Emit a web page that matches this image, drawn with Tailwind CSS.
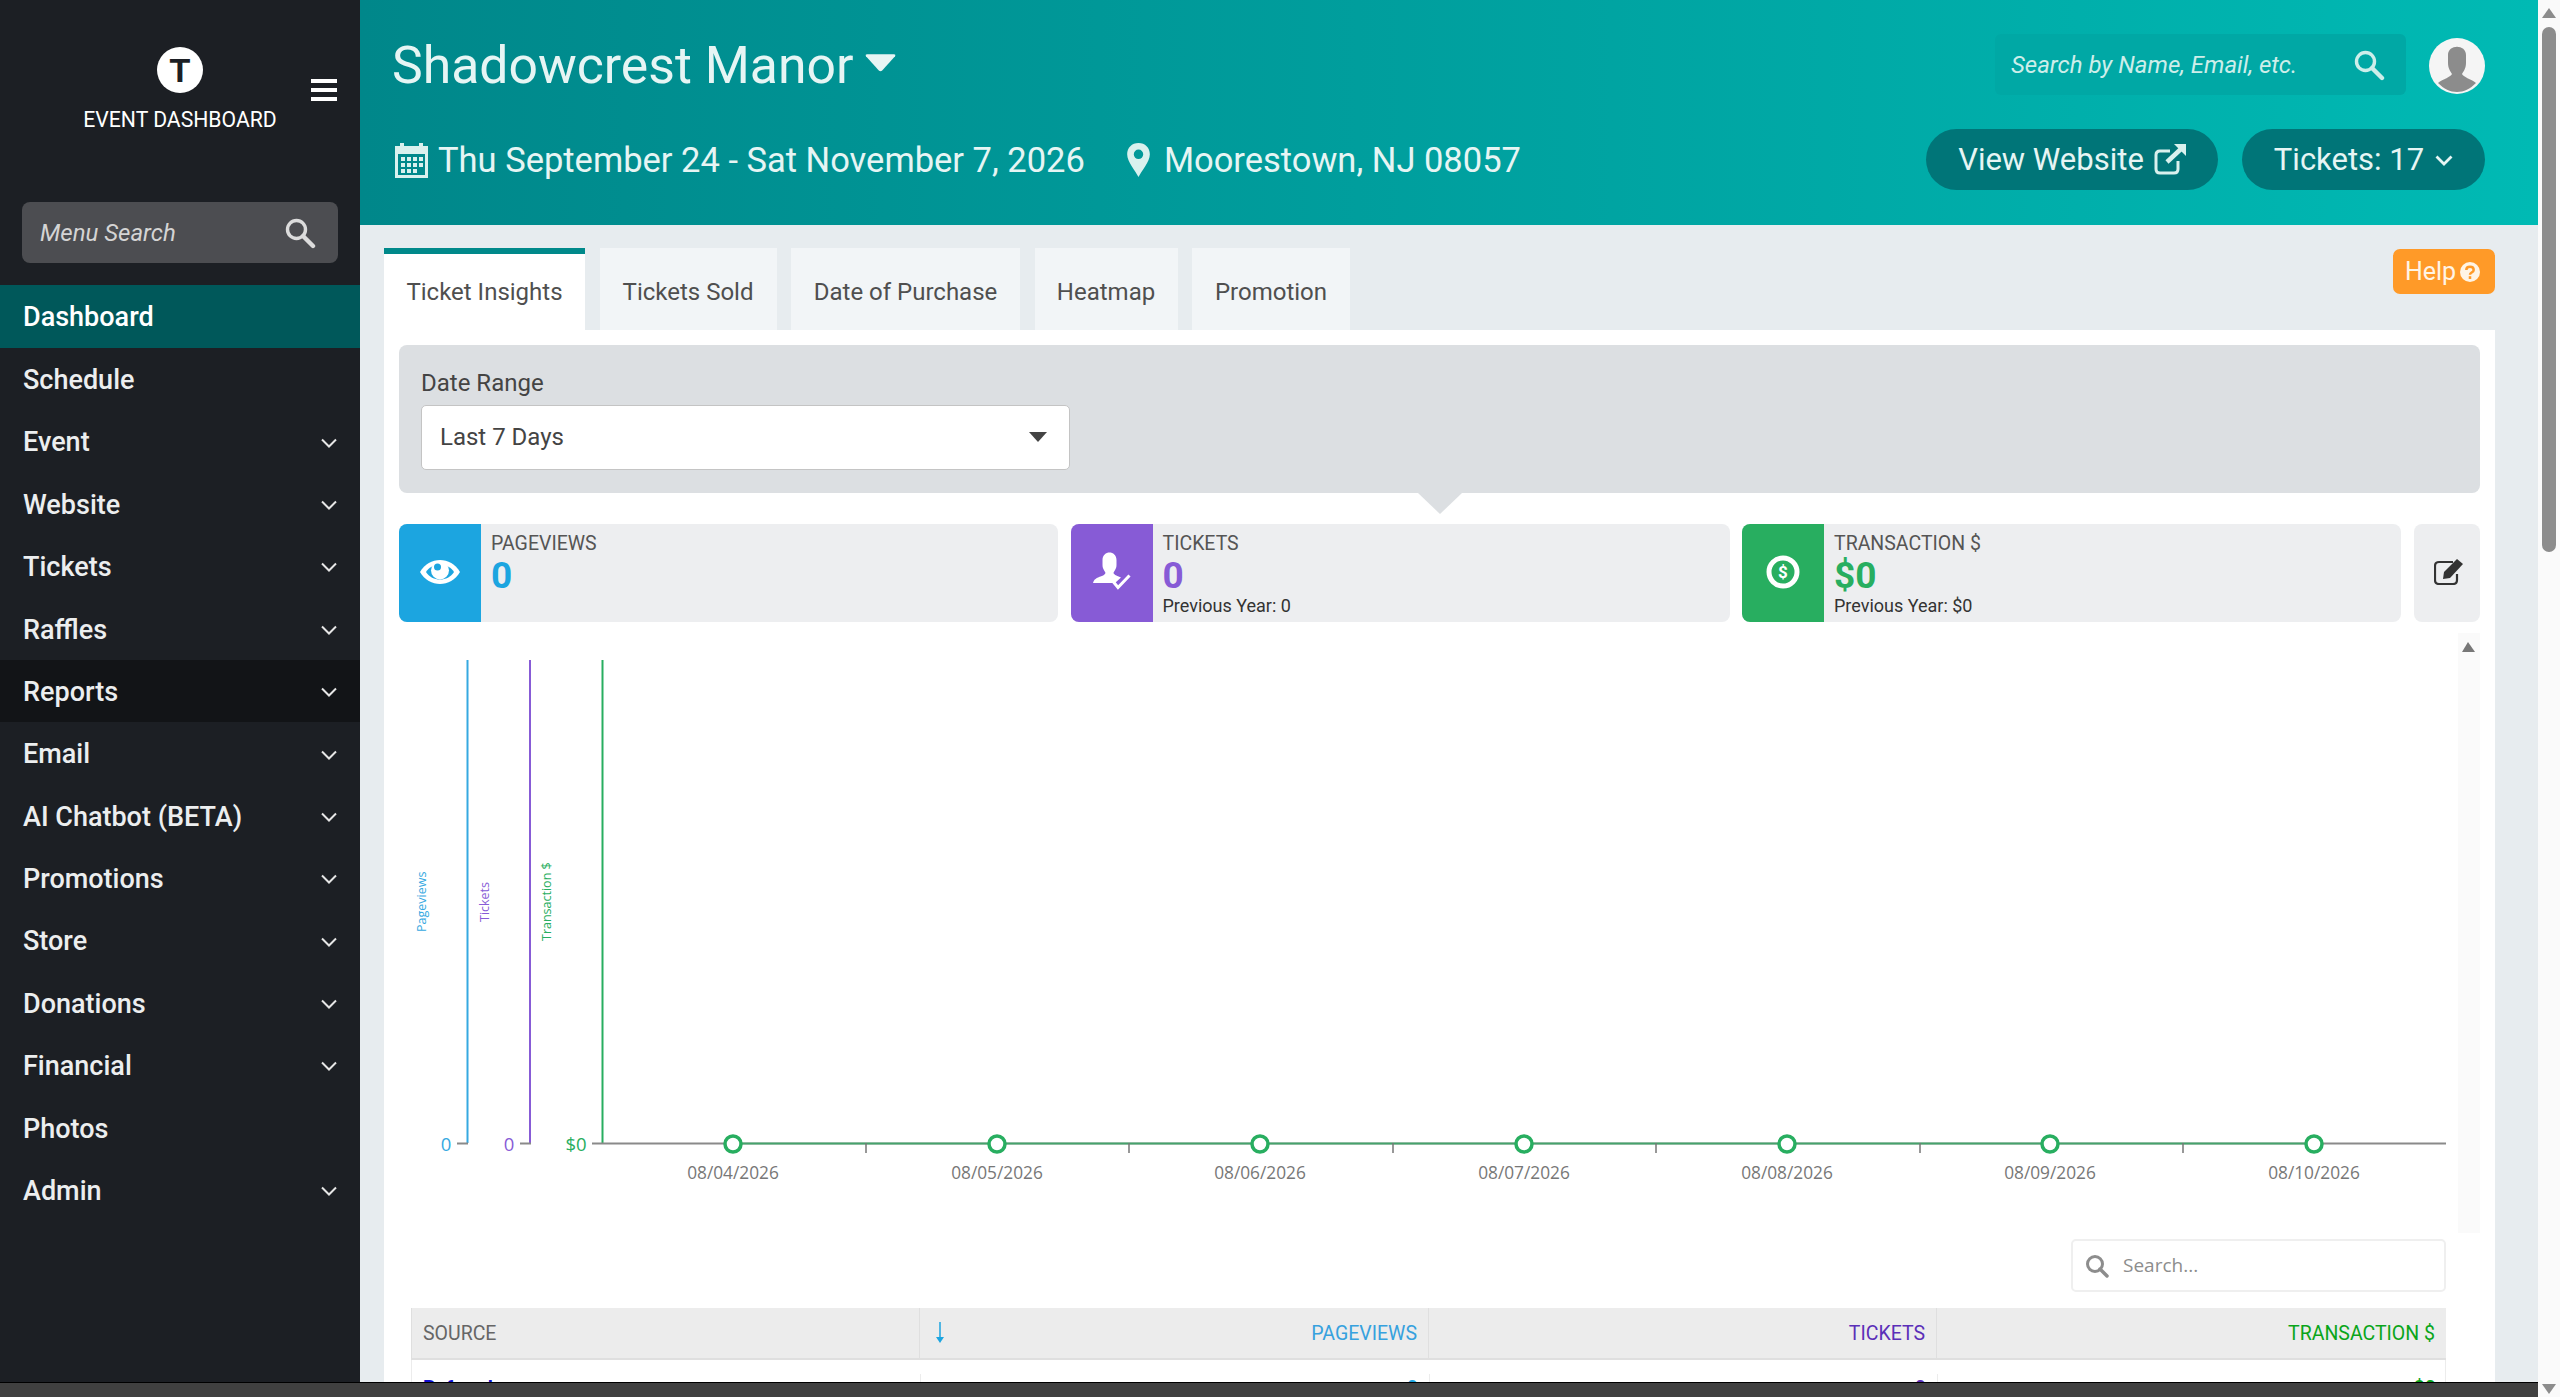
<!DOCTYPE html>
<html lang="en">
<head>
    <meta charset="UTF-8">
    <title>Event Dashboard</title>
    <script src="https://cdn.jsdelivr.net/npm/@tailwindcss/browser@4"></script>
</head>
<body class="h-screen overflow-hidden bg-[#f8f8f8] font-['Roboto',sans-serif]">
<div class="flex h-[1397px] flex-col">
<div class="flex h-[1382px] w-[2538px] overflow-hidden">

    <!-- Sidebar -->
    <aside class="flex w-[360px] shrink-0 flex-col bg-[#1c1f24]">
        <div class="relative h-[285px] shrink-0">
            <div class="absolute left-[157px] top-[47px] flex h-[46px] w-[46px] items-center justify-center rounded-full bg-white font-['Liberation_Sans',sans-serif] text-[34px] leading-none font-bold text-[#1c1f24]">T</div>
            <div class="absolute left-0 top-[105px] w-full text-center text-[21.2px] leading-[30px] text-white">EVENT DASHBOARD</div>
            <div class="absolute left-[311px] top-[79px] flex h-[22px] w-[26px] flex-col justify-between">
                <div class="h-[4px] bg-white"></div><div class="h-[4px] bg-white"></div><div class="h-[4px] bg-white"></div>
            </div>
            <div class="absolute left-[22px] top-[202px] flex h-[61px] w-[316px] items-center justify-between rounded-[8px] bg-[#4c4d51] pl-[18px] pr-[22px]">
                <span class="text-[24px] text-[#d4d4d4] italic">Menu Search</span>
                <svg width="32" height="32" viewBox="0 0 32 32" fill="none" stroke="#dcdcdc"><circle cx="12.5" cy="12.5" r="9" stroke-width="3.4"/><path d="M19 19 29 29" stroke-width="4.4" stroke-linecap="round"/></svg>
            </div>
        </div>
        <nav class="flex flex-col text-[27px] font-medium text-[#eceeef]">
            <a class="flex h-[63px] items-center bg-[#00585a] pl-[23px] pt-[2px] text-white">Dashboard</a>
            <a class="flex h-[62.4px] items-center pl-[23px] pt-[2px]">Schedule</a>
            <a class="flex h-[62.4px] items-center justify-between pl-[23px] pr-[23px] pt-[2px]">Event<svg width="16" height="10" viewBox="0 0 16 10" fill="none" stroke="#e6e6e6" stroke-width="2"><path d="M1 1.5 8 8.5 15 1.5"/></svg></a>
            <a class="flex h-[62.4px] items-center justify-between pl-[23px] pr-[23px] pt-[2px]">Website<svg width="16" height="10" viewBox="0 0 16 10" fill="none" stroke="#e6e6e6" stroke-width="2"><path d="M1 1.5 8 8.5 15 1.5"/></svg></a>
            <a class="flex h-[62.4px] items-center justify-between pl-[23px] pr-[23px] pt-[2px]">Tickets<svg width="16" height="10" viewBox="0 0 16 10" fill="none" stroke="#e6e6e6" stroke-width="2"><path d="M1 1.5 8 8.5 15 1.5"/></svg></a>
            <a class="flex h-[62.4px] items-center justify-between pl-[23px] pr-[23px] pt-[2px]">Raffles<svg width="16" height="10" viewBox="0 0 16 10" fill="none" stroke="#e6e6e6" stroke-width="2"><path d="M1 1.5 8 8.5 15 1.5"/></svg></a>
            <a class="flex h-[62.4px] items-center justify-between bg-[#121417] pl-[23px] pr-[23px] pt-[2px]">Reports<svg width="16" height="10" viewBox="0 0 16 10" fill="none" stroke="#e6e6e6" stroke-width="2"><path d="M1 1.5 8 8.5 15 1.5"/></svg></a>
            <a class="flex h-[62.4px] items-center justify-between pl-[23px] pr-[23px] pt-[2px]">Email<svg width="16" height="10" viewBox="0 0 16 10" fill="none" stroke="#e6e6e6" stroke-width="2"><path d="M1 1.5 8 8.5 15 1.5"/></svg></a>
            <a class="flex h-[62.4px] items-center justify-between pl-[23px] pr-[23px] pt-[2px]">AI Chatbot (BETA)<svg width="16" height="10" viewBox="0 0 16 10" fill="none" stroke="#e6e6e6" stroke-width="2"><path d="M1 1.5 8 8.5 15 1.5"/></svg></a>
            <a class="flex h-[62.4px] items-center justify-between pl-[23px] pr-[23px] pt-[2px]">Promotions<svg width="16" height="10" viewBox="0 0 16 10" fill="none" stroke="#e6e6e6" stroke-width="2"><path d="M1 1.5 8 8.5 15 1.5"/></svg></a>
            <a class="flex h-[62.4px] items-center justify-between pl-[23px] pr-[23px] pt-[2px]">Store<svg width="16" height="10" viewBox="0 0 16 10" fill="none" stroke="#e6e6e6" stroke-width="2"><path d="M1 1.5 8 8.5 15 1.5"/></svg></a>
            <a class="flex h-[62.4px] items-center justify-between pl-[23px] pr-[23px] pt-[2px]">Donations<svg width="16" height="10" viewBox="0 0 16 10" fill="none" stroke="#e6e6e6" stroke-width="2"><path d="M1 1.5 8 8.5 15 1.5"/></svg></a>
            <a class="flex h-[62.4px] items-center justify-between pl-[23px] pr-[23px] pt-[2px]">Financial<svg width="16" height="10" viewBox="0 0 16 10" fill="none" stroke="#e6e6e6" stroke-width="2"><path d="M1 1.5 8 8.5 15 1.5"/></svg></a>
            <a class="flex h-[62.4px] items-center pl-[23px] pt-[2px]">Photos</a>
            <a class="flex h-[62.4px] items-center justify-between pl-[23px] pr-[23px] pt-[2px]">Admin<svg width="16" height="10" viewBox="0 0 16 10" fill="none" stroke="#e6e6e6" stroke-width="2"><path d="M1 1.5 8 8.5 15 1.5"/></svg></a>
        </nav>
    </aside>

    <!-- Main -->
    <main class="flex min-w-0 flex-1 flex-col bg-[#e7ecef]">
        <header class="h-[225px] shrink-0 bg-gradient-to-r from-[#00878a] to-[#00bab4] pl-[32px] pr-[53px] text-[#e6f5f4]">
            <div class="flex h-[129px] items-start justify-between">
                <div class="flex items-center gap-[12px] pt-[32px]">
                    <h1 class="text-[51.7px] leading-[68px] font-normal">Shadowcrest Manor</h1>
                    <svg class="mb-[6px]" width="31" height="18" viewBox="0 0 32 18" fill="#e6f5f4"><path d="M2 0H30Q32 0 31 2L17.500 17Q16 18 14.500 17L1 2Q0 0 2 0Z"/></svg>
                </div>
                <div class="flex items-center gap-[23px] pt-[34px]">
                    <div class="flex h-[61px] w-[411px] items-center justify-between rounded-[6px] bg-[#00a8a5] pl-[16px] pr-[21px]">
                        <span class="text-[24px] text-[#cdeeea] italic">Search by Name, Email, etc.</span>
                        <svg width="32" height="32" viewBox="0 0 32 32" fill="none" stroke="#cdeeea"><circle cx="12.5" cy="12.500" r="9" stroke-width="3.4"/><path d="M19 19 29 29" stroke-width="4.4" stroke-linecap="round"/></svg>
                    </div>
                    <svg class="mt-[3px]" width="56" height="56" viewBox="0 0 56 56"><circle cx="28" cy="28" r="28" fill="#f5f5f5"/><path d="M19 17C19 6 37 6 37 17V25C37 31 34 34 33 36C34 39 42 41 47 45C41 51 35 54 28 54C21 54 15 51 9 45C14 41 22 39 23 36C22 34 19 31 19 25Z" fill="#8c8c8c"/></svg>
                </div>
            </div>
            <div class="flex h-[61px] items-center justify-between">
                <div class="flex items-center text-[34.5px]">
                    <svg class="ml-[3px]" width="33" height="36" viewBox="0 0 33 36" fill="#d9f1ee"><path fill-rule="evenodd" d="M0 4H5V1H9V4H24V1H28V4H33V36H0ZM3 12V33H30V12Z"/><path d="M6 15h4v4H6zM12 15h4v4h-4zM18 15h4v4h-4zM24 15h4v4h-4zM6 21h4v4H6zM12 21h4v4h-4zM18 21h4v4h-4zM24 21h4v4h-4zM6 27h4v4H6zM12 27h4v4h-4zM18 27h4v4h-4z"/></svg>
                    <span class="ml-[10px] pt-[2px]">Thu September 24 - Sat November 7, 2026</span>
                    <svg class="ml-[42px]" width="23" height="34" viewBox="0 0 24 36" fill="#d9f1ee"><path fill-rule="evenodd" d="M12 0C5 0 0 5 0 12C0 20 9 30 12 36C15 30 24 20 24 12C24 5 19 0 12 0ZM12 7A5 5 0 1 1 12 17A5 5 0 1 1 12 7Z"/></svg>
                    <span class="ml-[14px] pt-[2px]">Moorestown, NJ 08057</span>
                </div>
                <div class="flex items-center gap-[24px] text-[31px]">
                    <a class="flex h-[61px] w-[292px] items-center justify-center gap-[10px] rounded-full bg-[#007578] pt-[1px]">View Website
                        <svg class="mb-[3px]" width="32" height="32" viewBox="0 0 32 32" fill="none" stroke="#d9f1ee"><path d="M24 18V26Q24 30 20 30H6Q2 30 2 26V12Q2 8 6 8H16" stroke-width="3"/><path d="M13 19 28 5" stroke-width="4.500"/><path d="M20 1H32V13Z" fill="#d9f1ee" stroke="none"/></svg></a>
                    <a class="flex h-[61px] w-[243px] items-center justify-center gap-[11px] rounded-full bg-[#007578] pt-[1px]">Tickets: 17
                        <svg width="18" height="11" viewBox="0 0 18 11" fill="none" stroke="#e6f5f4" stroke-width="2.800"><path d="M1.500 1.500 9 9 16.500 1.500"/></svg></a>
                </div>
            </div>
        </header>

        <div class="relative flex-1 overflow-hidden pl-[24px] pr-[43px] pt-[23px]">
            <a class="absolute right-[43px] top-[24px] flex h-[45px] w-[102px] items-center justify-center gap-[4px] rounded-[7px] bg-[#ff9a28] pr-[3px] text-[25px] text-[#fff4e5]">Help
                <svg width="20" height="20" viewBox="0 0 19 19"><circle cx="9.500" cy="9.500" r="9.500" fill="#fff4e5"/><path d="M6 7.500C6 3.500 13 3.500 13 7.500C13 10 9.500 10 9.500 12" fill="none" stroke="#ff9a28" stroke-width="2.400"/><rect x="8.300" y="13.500" width="2.400" height="2.600" fill="#ff9a28"/></svg></a>

            <!-- Tabs -->
            <div class="flex h-[82px] gap-[14.5px] text-[24px] leading-none text-[#4f4f4f]">
                <a class="flex w-[201px] items-center justify-center border-t-[6px] border-[#00898a] bg-white pb-[1px]">Ticket Insights</a>
                <a class="flex w-[177px] items-center justify-center bg-[#f2f5f7] pt-[5px]">Tickets Sold</a>
                <a class="flex w-[229px] items-center justify-center bg-[#f2f5f7] pt-[5px]">Date of Purchase</a>
                <a class="flex w-[143px] items-center justify-center bg-[#f2f5f7] pt-[5px]">Heatmap</a>
                <a class="flex w-[158px] items-center justify-center bg-[#f2f5f7] pt-[5px]">Promotion</a>
            </div>

            <!-- Panel -->
            <section class="h-[1060px] bg-white px-[15px] pt-[15px]">
                <div class="relative h-[148px] rounded-[8px] bg-[#dcdfe2] pl-[22px] pt-[24px] text-[#444]">
                    <div class="text-[24px] leading-[28px]">Date Range</div>
                    <div class="mt-[8px] flex h-[65px] w-[649px] items-center justify-between rounded-[5px] border border-[#c4c4c4] bg-white pb-[2px] pl-[18px] pr-[22px] text-[24px]">Last 7 Days
                        <div class="h-0 w-0 border-x-[9px] border-t-[10px] border-x-transparent border-t-[#444]"></div>
                    </div>
                    <div class="absolute left-[1019px] top-[148px] h-0 w-0 border-x-[22px] border-t-[21px] border-x-transparent border-t-[#dcdfe2]"></div>
                </div>

                <!-- Stat cards -->
                <div class="mt-[31px] flex gap-[12.500px]">
                    <div class="flex h-[98px] w-[659px] overflow-hidden rounded-[8px] bg-[#edeef0]">
                        <div class="flex w-[82px] items-center justify-center bg-[#1ca5e0] pb-[2px]">
                            <svg width="40" height="24" viewBox="0 0 40 24"><path fill="#fff" d="M0 12C9 -4 31 -4 40 12C31 28 9 28 0 12Z"/><path fill="#1ca5e0" d="M6 12C12 2 28 2 34 12C28 22 12 22 6 12Z"/><circle cx="20" cy="10.500" r="9" fill="#fff"/><circle cx="17.500" cy="7" r="3.500" fill="#1ca5e0"/></svg>
                        </div>
                        <div class="pl-[10px] pt-[8px]">
                            <div class="text-[19.5px] leading-[24px] text-[#555]">PAGEVIEWS</div>
                            <div class="text-[37px] leading-[40px] font-bold text-[#1ca5e0]">0</div>
                        </div>
                    </div>
                    <div class="flex h-[98px] w-[659px] overflow-hidden rounded-[8px] bg-[#edeef0]">
                        <div class="flex w-[82px] items-center justify-center bg-[#875bd6] pb-[4px]">
                            <svg width="38" height="38" viewBox="0 0 38 38" fill="#fff"><path d="M9.500 8C9.500 -2 23.500 -2 23.500 8V13C23.500 17 21 19 20.500 21C21 23 25 24 28 25.500L22 31H0C1 27 4 26 6 25C9 24 12 23 12.500 21C12 19 9.500 17 9.500 13Z"/><path d="M20.500 30 25 35.500 36.500 23.500" fill="none" stroke="#fff" stroke-width="3"/></svg>
                        </div>
                        <div class="pl-[10px] pt-[8px]">
                            <div class="text-[19.5px] leading-[24px] text-[#555]">TICKETS</div>
                            <div class="text-[37px] leading-[40px] font-bold text-[#875bd6]">0</div>
                            <div class="text-[18px] leading-[20px] text-[#333]">Previous Year: 0</div>
                        </div>
                    </div>
                    <div class="flex h-[98px] w-[659px] overflow-hidden rounded-[8px] bg-[#edeef0]">
                        <div class="flex w-[82px] items-center justify-center bg-[#28ae60] pb-[2px]">
                            <svg width="34" height="34" viewBox="0 0 34 34"><circle cx="17" cy="17" r="14" fill="none" stroke="#fff" stroke-width="5"/><text x="17" y="23" text-anchor="middle" font-family="Roboto" font-size="17" font-weight="700" fill="#fff">$</text></svg>
                        </div>
                        <div class="pl-[10px] pt-[8px]">
                            <div class="text-[19.5px] leading-[24px] text-[#555]">TRANSACTION $</div>
                            <div class="text-[37px] leading-[40px] font-bold text-[#28ae60]">$0</div>
                            <div class="text-[18px] leading-[20px] text-[#333]">Previous Year: $0</div>
                        </div>
                    </div>
                    <div class="flex h-[98px] flex-1 items-center justify-center rounded-[8px] bg-[#edeef0] pb-[4px] pl-[4px]">
                        <svg width="30" height="28" viewBox="0 0 30 28" fill="none" stroke="#333"><path d="M23 17V23Q23 27 19 27H5Q1 27 1 23V9Q1 5 5 5H19" stroke-width="2.200"/><path d="M10 15 23 2 29 7 16 21 9 22Z" fill="#333" stroke="none"/></svg>
                    </div>
                </div>

                <!-- Chart -->
                <div class="relative mt-[11px] h-[600px]">
                    <div class="absolute right-0 top-0 h-full w-[22px] bg-[#fafafa]"></div>
                    <svg class="absolute left-[-15px] top-0" width="2111" height="600" viewBox="384 633 2111 600">
                        <g font-family="'Open Sans',sans-serif">
                            <path d="M2462 652 2468 642 2475 652Z" fill="#777"/>
                            <text transform="translate(426 932) rotate(-90)" font-size="12.500" fill="#36a9e1">Pageviews</text>
                            <text transform="translate(489 922) rotate(-90)" font-size="12.500" fill="#875bd6">Tickets</text>
                            <text transform="translate(551 941) rotate(-90)" font-size="12.500" fill="#28ae60">Transaction $</text>
                            <path d="M467.500 660V1143" stroke="#36a9e1" stroke-width="2"/>
                            <path d="M530 660V1143" stroke="#875bd6" stroke-width="2"/>
                            <path d="M602.500 660V1143" stroke="#28ae60" stroke-width="2"/>
                            <path d="M457 1143.500H468M520 1143.500H531M592 1143.500H2446" stroke="#8a8a8a" stroke-width="2"/>
                            <path d="M733 1143.500H2314" stroke="#28ae60" stroke-width="2" opacity="0.700"/>
                            <path d="M866 1143V1153M1129 1143V1153M1393 1143V1153M1656 1143V1153M1920 1143V1153M2183 1143V1153" stroke="#777" stroke-width="1.500"/>
                            <g fill="#fff" stroke="#28ae60" stroke-width="3.500">
                                <circle cx="733" cy="1144" r="8"/><circle cx="997" cy="1144" r="8"/><circle cx="1260" cy="1144" r="8"/><circle cx="1524" cy="1144" r="8"/><circle cx="1787" cy="1144" r="8"/><circle cx="2050" cy="1144" r="8"/><circle cx="2314" cy="1144" r="8"/>
                            </g>
                            <text x="446" y="1151" font-size="18.500" text-anchor="middle" fill="#36a9e1">0</text>
                            <text x="509" y="1151" font-size="18.500" text-anchor="middle" fill="#875bd6">0</text>
                            <text x="576" y="1151" font-size="18.500" text-anchor="middle" fill="#28ae60">$0</text>
                            <g font-size="17.300" text-anchor="middle" fill="#777">
                                <text x="733" y="1179">08/04/2026</text><text x="997" y="1179">08/05/2026</text><text x="1260" y="1179">08/06/2026</text><text x="1524" y="1179">08/07/2026</text><text x="1787" y="1179">08/08/2026</text><text x="2050" y="1179">08/09/2026</text><text x="2314" y="1179">08/10/2026</text>
                            </g>
                        </g>
                    </svg>
                </div>

                <!-- Table search -->
                <div class="flex justify-end pr-[34px] pt-[6px]">
                    <div class="flex h-[53px] w-[375px] items-center gap-[14px] rounded-[5px] border-2 border-[#efefef] pl-[12px] font-['Open_Sans',sans-serif] text-[19px] text-[#8d8d8d]">
                        <svg width="24" height="24" viewBox="0 0 24 24" fill="none" stroke="#8d8d8d"><circle cx="10" cy="10" r="7.500" stroke-width="3"/><path d="M15 15 22 22" stroke-width="3.500" stroke-linecap="round"/></svg>
                        Search...
                    </div>
                </div>

                <!-- Table -->
                <div class="ml-[12px] mr-[34px] mt-[16px] text-[19.5px]">
                    <div class="grid h-[52px] grid-cols-[509px_509px_508px_509px] items-center border-b-2 border-[#dfdfdf] bg-[#ececec]">
                        <div class="flex h-full items-center border-x border-[#dfdfdf] pl-[11px] pt-[2px] text-[#666]">SOURCE</div>
                        <div class="relative flex h-full items-center justify-end border-r border-[#dfdfdf] pr-[11px] pt-[2px] text-[#36a1de]">
                            <svg class="absolute left-[15px] top-[14px]" width="10" height="22" viewBox="0 0 10 22"><path d="M5 0V16" stroke="#1ca5e0" stroke-width="1.500"/><path d="M1 15H9L5 21Z" fill="#1ca5e0"/></svg>
                            PAGEVIEWS
                        </div>
                        <div class="flex h-full items-center justify-end border-r border-[#dfdfdf] pr-[11px] pt-[2px] text-[#5b2fb8]">TICKETS</div>
                        <div class="flex h-full items-center justify-end pr-[11px] pt-[2px] text-[#0aa51a]">TRANSACTION $</div>
                    </div>
                    <div class="grid h-[52px] grid-cols-[509px_509px_508px_509px] items-start border-x border-[#ececec] pt-[14px]">
                        <div class="border-r border-[#ececec] pl-[11px] font-bold text-[#1010d0]">Referrals</div>
                        <div class="border-r border-[#ececec] pr-[11px] text-right font-bold text-[#1ca5e0]">0</div>
                        <div class="border-r border-[#ececec] pr-[11px] text-right font-bold text-[#5b2fb8]">0</div>
                        <div class="pr-[11px] text-right font-bold text-[#0aa51a]">$0</div>
                    </div>
                </div>
            </section>
        </div>
    </main>
</div>

<!-- Bottom bar -->
<div class="h-[15px] w-[2538px] border-t border-black bg-[#404040]"></div>

<!-- Page scrollbar -->
<div class="absolute right-0 top-0 h-[1397px] w-[22px] bg-[#fafafa]">
    <div class="mx-auto mt-[8px] h-0 w-0 border-x-[7px] border-b-[10px] border-x-transparent border-b-[#8c8c8c]"></div>
    <div class="mx-auto mt-[9px] h-[525px] w-[14px] rounded-full bg-[#8c8c8c]"></div>
    <div class="absolute bottom-[3px] left-[4px] h-0 w-0 border-x-[7px] border-t-[10px] border-x-transparent border-t-[#8c8c8c]"></div>
</div>
</div>
</body>
</html>
